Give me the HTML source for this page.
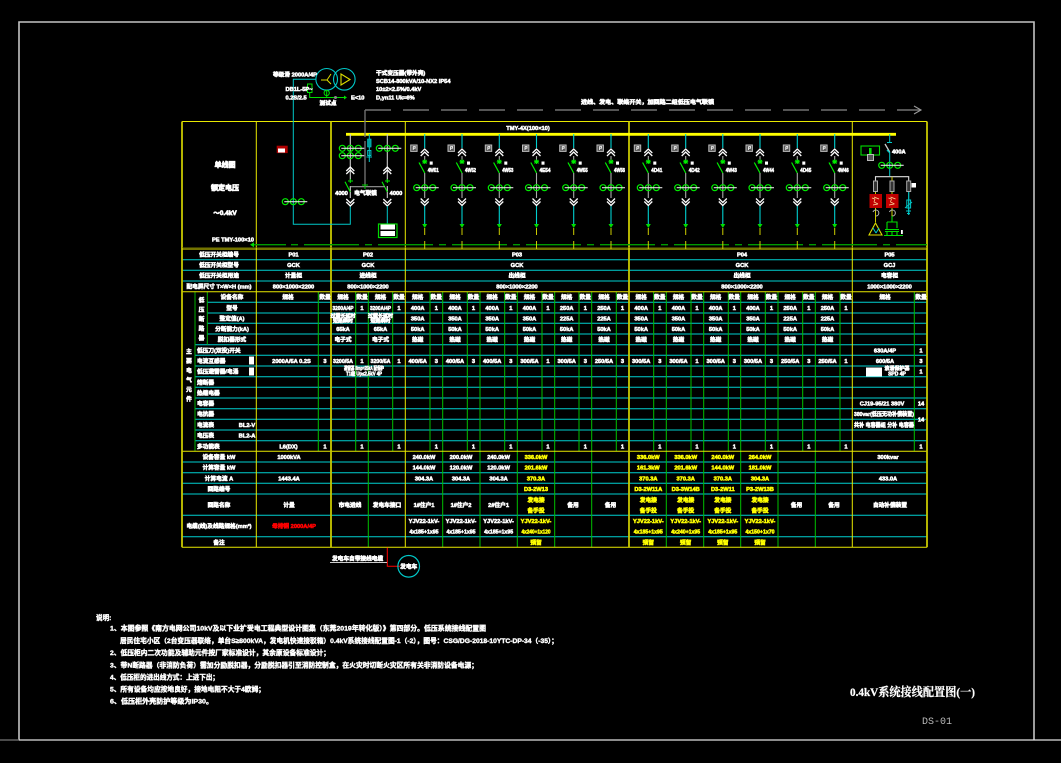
<!DOCTYPE html>
<html lang="zh"><head><meta charset="utf-8"><title>0.4kV系统接线配置图</title>
<style>
html,body{margin:0;padding:0;background:#000;width:1061px;height:763px;overflow:hidden}
svg{display:block}
text{font-family:"Liberation Sans","Noto Sans CJK SC",sans-serif;font-size:5.7px;font-weight:700;fill:#fff;stroke:#fff;stroke-width:.55;text-anchor:middle}
.l{text-anchor:start}
.y{fill:#ff0;stroke:#ff0}
.r{fill:#f00;stroke:#f00}
.s{font-size:5px}
.n{font-size:6.6px;stroke-width:.4;text-anchor:start}
.t{font-family:"Liberation Serif","Noto Serif CJK SC",serif;font-size:12px;stroke-width:.25;text-anchor:start}
.d{font-family:"Liberation Mono",monospace;font-size:10px;font-weight:400;fill:#bbb;stroke:none;text-anchor:start}
</style></head><body>
<svg xmlns="http://www.w3.org/2000/svg" width="1061" height="763" viewBox="0 0 1061 763">
<defs>
<g id="tri"><circle cx="-8" cy="0" r="3" fill="none" stroke="#0e0" stroke-width="1.2"/><circle cx="0" cy="0" r="3" fill="none" stroke="#0e0" stroke-width="1.2"/><circle cx="8" cy="0" r="3" fill="none" stroke="#0e0" stroke-width="1.2"/><path d="M-9 0H14" stroke="#ddd" fill="none" stroke-width="1.1"/></g>
<path id="cu" d="M-4 4L0 0L4 4M-4 7L0 3L4 7" fill="none" stroke="#fff" stroke-width="1.3"/>
<path id="cd" d="M-4 0L0 4L4 0M-4 3L0 7L4 3" fill="none" stroke="#fff" stroke-width="1.3"/>
<g id="fd">
<path d="M0 134V148M0 205V224" stroke="#00d0d0" fill="none" stroke-width="1.1"/>
<path d="M0 156V160M0 173V198" stroke="#aaa" fill="none" stroke-width="1.1"/>
<use href="#cu" y="149"/>
<path d="M-2.5 161.7h5M0 159.5v4.5M-2 160l4 3.5M2 160l-4 3.5" stroke="#0e0" fill="none" stroke-width="1"/>
<path d="M-5.7 162.5L0 173" stroke="#0e0" fill="none" stroke-width="1.2"/>
<use href="#tri" y="187.7"/>
<use href="#cd" y="198.5"/>
<path d="M-2.5 224H2.5L0 228Z" fill="#0d0"/>
<path d="M0 228V235M0 241V249" stroke="#cc0" fill="none"/>
<rect x="-14" y="145" width="6.4" height="6.4" fill="#555" stroke="#bbb"/>
<path d="M-11.5 146.5v3.5M-11.5 146.5h2v1.7h-2" stroke="#fff" fill="none" stroke-width=".8"/>
<rect x="5" y="161.5" width="3" height="3.2" fill="#fff"/>
</g>
</defs>
<rect width="1061" height="763" fill="#000"/>

<!-- frame -->
<path d="M19 740V22H1034V740" fill="none" stroke="#c4c4c4" stroke-width="1.6"/>
<path d="M0 740H19" stroke="#777" stroke-width="1.2"/>
<path d="M19 740H1061" stroke="#e0e0e0" stroke-width="1.2"/>

<!-- horizontal grid -->
<g fill="none" stroke="#00d0d0" stroke-width="1">
<path d="M182 259.7H927M182 270.3H927M182 281H927"/>
<path d="M207 302.3H927M207 313H927M207 323.3H927M207 334H927"/>
<path d="M195 344.7H927M195 355.3H927M195 366H927M195 376.7H927M195 387.3H927M195 398H927M195 408.7H927M195 419.3H927M195 430H927M195 440.7H927"/>
<path d="M182 462H927M182 472.7H927M182 483.3H927M182 494H927M182 515.3H927M182 536.7H927"/>
</g>
<!-- green verticals -->
<g fill="none" stroke="#00c000" stroke-width="1">
<path d="M318.3 291.7V451M355.7 291.7V451M368.3 291.7V547M392.7 291.7V451"/>
<path d="M430 291.7V451M442.7 291.7V547M467.3 291.7V451M480 291.7V547M504.7 291.7V451M517.3 291.7V547M542 291.7V451M554.7 291.7V547M579 291.7V451M591.7 291.7V547M616.3 291.7V451"/>
<path d="M653.7 291.7V451M666.3 291.7V547M691 291.7V451M703.7 291.7V547M728.3 291.7V451M740.7 291.7V547M765.3 291.7V451M778 291.7V547M802.7 291.7V451M815.3 291.7V547M840 291.7V451M914.3 291.7V451"/>
<path d="M195 291.7V451M207.3 291.7V344.7" stroke="#00b000"/>
</g>
<!-- yellow grid -->
<g fill="none" stroke="#e8e800" stroke-width="1">
<path d="M182 121.5H927M182 249H927M182 291.7H927M182 451.3H927M182 547.3H927"/>
<path d="M256.3 121.5V547M405.3 121.5V547M852.3 121.5V547"/>
<path d="M182 121.5V547.3M331 121.5V547M629 121.5V547M927 121.5V547.3" stroke="#c8c800" stroke-width="1.8"/>
<path d="M182 247.5H927" stroke="#777700" stroke-width=".6"/>
</g>
<path d="M346 134.3H896" stroke="#ff0" stroke-width="2.8"/>

<!-- dashed green PE -->
<path d="M252 244.7H927" stroke="#009a00" stroke-width="1.4" stroke-dasharray="34 5 7 6 55 6 7 6 55 6 7 6 55 6 7 6 55 6 7 6 55 6 7 6 55 6 7 6 55 6 7 6 55 6 7 6 55 6 7 6"/>
<path d="M250 244.7L254 242.2V247.2Z" fill="#0d0"/>
<!-- dashed gray -->
<path d="M365 110H920" fill="none" stroke="#888" stroke-width="1.3" stroke-dasharray="26 12"/>
<path d="M365 110V120M365 141V172M365 170V186" stroke="#777" fill="none" stroke-width="1.3"/>
<path d="M365 120V137" stroke="#777" fill="none" stroke-width="1.3"/>
<path d="M914 106L921 110L914 114" fill="none" stroke="#999" stroke-width="1.1"/>

<!-- transformer -->
<circle cx="326.7" cy="79.3" r="10.8" fill="none" stroke="#00c8c8" stroke-width="1.1"/>
<circle cx="344.3" cy="79.3" r="10.8" fill="none" stroke="#00c8c8" stroke-width="1.1"/>
<path d="M321 80H327M327 80L331 74M327 80L331 84" stroke="#dd0" fill="none" stroke-width="1"/>
<path d="M341 74V85L350 79.5Z" stroke="#dd0" fill="none" stroke-width="1.1"/>
<path d="M315.5 79.3H293.3V224.3H350.3V205" stroke="#00c8c8" fill="none" stroke-width="1"/>
<rect x="307.5" y="84" width="4.5" height="8.5" fill="none" stroke="#0d0"/>
<path d="M309.7 92.5V97.5H344" stroke="#0d0" fill="none"/>
<path d="M344 95.5L347 97.5L344 99.5Z" fill="#0d0"/>
<circle cx="326.7" cy="93" r="2.6" fill="none" stroke="#0d0"/>
<path d="M326.7 90V97.5" stroke="#0d0"/>
<circle cx="335.5" cy="97.5" r="1.5" fill="#888"/>
<text class="l" x="273" y="76.5">等级滑 2000A/4P</text>
<text class="l" x="285.5" y="91">DB1L-5P~</text>
<text class="l" x="285.5" y="99.5">0.2S/2.5</text>
<text class="l" x="351" y="99.5">E&lt;10</text>
<text x="328" y="105">测试点</text>
<text class="l" x="376" y="75">干式变压器(带外壳)</text>
<text class="l" x="376" y="83.2">SCB14-800kVA/10-NX2 IP54</text>
<text class="l" x="376" y="91.2">10±2×2.5%/0.4kV</text>
<text class="l" x="376" y="99.5">D,yn11 Uk=6%</text>
<text class="l" x="581" y="104" textLength="133" lengthAdjust="spacingAndGlyphs">进线、发电、联络开关，加回路二组低压电气联锁</text>
<text x="528" y="129.8">TMY-4X(100×10)</text>

<!-- left panel text -->
<text style="font-size:7px;stroke-width:.7" x="225" y="167">单线图</text>
<text style="font-size:7px;stroke-width:.7" x="225" y="190">额定电压</text>
<text style="font-size:6.5px;stroke-width:.7" x="225" y="215">～0.4kV</text>
<text class="l" x="212" y="241.5">PE TMY-100×10</text>
<rect x="276.7" y="145.7" width="11" height="7.4" fill="#b00000"/>
<rect x="278" y="148.5" width="7" height="4" fill="#fff"/>
<use href="#tri" x="293.3" y="201.7"/>

<!-- P02 -->
<path d="M350.3 134V180M387.3 134V180M350.3 186V198M387.3 186V198" stroke="#ccc" fill="none" stroke-width="1.1"/>
<use href="#tri" x="350.3" y="148.3"/><use href="#tri" x="350.3" y="155.7"/><use href="#tri" x="387.3" y="148.3"/>
<use href="#cu" x="350.3" y="167"/><use href="#cu" x="387.3" y="167"/>
<path d="M348 181h5M350.3 179v4M385 181h5M387.3 179v4" stroke="#0e0" fill="none"/>
<path d="M345 181.7L350.3 192M382 181.7L387.3 192" stroke="#0e0" fill="none" stroke-width="1.1"/>
<use href="#cd" x="350.3" y="199"/><use href="#cd" x="387.3" y="199"/>
<path d="M387.3 206V224" stroke="#00c8c8" fill="none"/>
<path d="M351 186.7H385" stroke="#999" fill="none" stroke-width="1.2"/>
<path d="M362 185H368M365 185V189" stroke="#0c0" fill="none"/>
<rect x="378.5" y="224" width="18.5" height="13.5" fill="none" stroke="#0d0" stroke-width="1.2"/>
<rect x="380.5" y="224.5" width="14.5" height="5" fill="#fff"/><rect x="380.5" y="231" width="14.5" height="5" fill="#fff"/>
<path d="M369.3 134V141M369.3 147V162" stroke="#00c8c8" fill="none"/>
<rect x="367.5" y="139" width="3.6" height="8" fill="#00a0a0" stroke="#00c8c8" stroke-width=".6"/>
<rect x="367.7" y="150.5" width="3.2" height="5" fill="none" stroke="#00c8c8"/>
<path d="M366.5 157H372" stroke="#00c8c8" fill="none"/>
<text x="341.5" y="195">4000</text>
<text x="365.5" y="195">电气联锁</text>
<text x="396" y="195">4000</text>

<!-- feeders -->
<use href="#fd" x="424.7"/><use href="#fd" x="462"/><use href="#fd" x="499.3"/><use href="#fd" x="536.5"/><use href="#fd" x="573.7"/><use href="#fd" x="611"/><use href="#fd" x="648.3"/><use href="#fd" x="685.7"/><use href="#fd" x="722.8"/><use href="#fd" x="760"/><use href="#fd" x="797.3"/><use href="#fd" x="834.7"/>
<g>
<text class="l" x="427.7" y="172.2" textLength="11" lengthAdjust="spacingAndGlyphs">4W51</text><text class="l" x="465" y="172.2" textLength="11" lengthAdjust="spacingAndGlyphs">4W52</text><text class="l" x="502.3" y="172.2" textLength="11" lengthAdjust="spacingAndGlyphs">4W53</text><text class="l" x="539.5" y="172.2" textLength="11" lengthAdjust="spacingAndGlyphs">4E54</text><text class="l" x="576.7" y="172.2" textLength="11" lengthAdjust="spacingAndGlyphs">4W55</text><text class="l" x="614" y="172.2" textLength="11" lengthAdjust="spacingAndGlyphs">4W56</text><text class="l" x="651.3" y="172.2" textLength="11" lengthAdjust="spacingAndGlyphs">4D41</text><text class="l" x="688.7" y="172.2" textLength="11" lengthAdjust="spacingAndGlyphs">4D42</text><text class="l" x="725.8" y="172.2" textLength="11" lengthAdjust="spacingAndGlyphs">4W43</text><text class="l" x="763" y="172.2" textLength="11" lengthAdjust="spacingAndGlyphs">4W44</text><text class="l" x="800.3" y="172.2" textLength="11" lengthAdjust="spacingAndGlyphs">4D45</text><text class="l" x="837.7" y="172.2" textLength="11" lengthAdjust="spacingAndGlyphs">4W46</text>
</g>

<!-- P05 -->
<path d="M889.7 134V142" stroke="#00c8c8" fill="none"/>
<path d="M887 142.5H892" stroke="#00c8c8" fill="none"/>
<path d="M885 144L889.7 152" stroke="#ccc" fill="none" stroke-width="1.3"/>
<path d="M887 150L890 153" stroke="#00c8c8" fill="none" stroke-width="1.3"/>
<path d="M889.7 153V176" stroke="#00c8c8" fill="none"/>
<use href="#tri" x="889.7" y="165.3"/>
<text class="l" x="892" y="153.3">400A</text>
<rect x="861" y="146" width="18.5" height="9" fill="none" stroke="#0d0" stroke-width="1.1"/>
<rect x="869" y="148" width="2.6" height="6" fill="#0d0"/>
<rect x="867.5" y="154.5" width="6" height="6" fill="#555" stroke="#bbb"/>
<path d="M875.5 187V176.7H908.7V187" fill="none" stroke="#ddd" stroke-width="1.1"/>
<path d="M875.5 191V194M892 176.7V194" stroke="#cc0" fill="none"/>
<path d="M875.5 208V222M892 208V222" stroke="#cc0" fill="none"/>
<path d="M908.7 191V215" stroke="#00c8c8" fill="none" stroke-width="1.2"/>
<rect x="873.5" y="181" width="4" height="10.5" fill="#333" stroke="#aaa"/>
<rect x="890" y="181" width="4" height="10.5" fill="#333" stroke="#aaa"/>
<rect x="906.7" y="181" width="4" height="10.5" fill="#333" stroke="#aaa"/>
<rect x="911.5" y="183" width="4.5" height="4.5" fill="#fff"/>
<rect x="869.5" y="194" width="12.5" height="14" fill="#c00000"/>
<rect x="886" y="194" width="12.5" height="14" fill="#c00000"/>
<path d="M872 198l3 1-1 3 4 2M874 197l5 2M873 205l5-1M888.5 198l3 1-1 3 4 2M890.5 197l5 2M889 205l5-1" stroke="#ffe0a0" fill="none" stroke-width=".7"/>
<path d="M873 212a3 3 0 1 1 3 4M889.5 212a3 3 0 1 1 3 4" stroke="#bbb" fill="none" stroke-width="1"/>
<path d="M875.5 223L869 235H882Z" fill="none" stroke="#dd0" stroke-width="1.1"/>
<path d="M873 228L876 233M879 228L876 233" stroke="#00c8c8" fill="none"/>
<path d="M887 222H897V228M887 222V229M892 216V222M885 229.5H899M885 231.5H899M887 231.5V235M892 231.5V235M897 231.5V235M884 235.5H903" stroke="#0d0" fill="none" stroke-width="1.1"/>
<rect x="901" y="230" width="1.8" height="4" fill="#fff"/>
<rect x="906.8" y="200" width="3.8" height="8" fill="none" stroke="#00c8c8"/>
<path d="M905 208L912 202M906 211H911M907 213.5H910" stroke="#00c8c8" fill="none" stroke-width="1"/>

<!-- row labels -->
<text x="219" y="256.5">低压开关柜编号</text><text x="219" y="267">低压开关柜型号</text><text x="219" y="277.7">低压开关柜用途</text><text x="219" y="288.4">配电屏尺寸 T×W×H (mm)</text>
<text x="293.5" y="256.5">P01</text><text x="368" y="256.5">P02</text><text x="517" y="256.5">P03</text><text x="742" y="256.5">P04</text><text x="889.5" y="256.5">P05</text>
<text x="293.5" y="267">GCK</text><text x="368" y="267">GCK</text><text x="517" y="267">GCK</text><text x="742" y="267">GCK</text><text x="889.5" y="267">GCJ</text>
<text x="293.5" y="277.7">计量柜</text><text x="368" y="277.7">进线柜</text><text x="517" y="277.7">出线柜</text><text x="742" y="277.7">出线柜</text><text x="889.5" y="277.7">电容柜</text>
<text x="293.5" y="288.4">800×1000×2200</text><text x="368" y="288.4">800×1000×2200</text><text x="517" y="288.4">800×1000×2200</text><text x="742" y="288.4">800×1000×2200</text><text x="889.5" y="288.4">1000×1000×2200</text>

<!-- vertical labels -->
<text x="189" y="353.5">主</text><text x="189" y="363">要</text><text x="189" y="372.5">电</text><text x="189" y="382">气</text><text x="189" y="391.5">元</text><text x="189" y="401">件</text>
<text x="201.5" y="302">低</text><text x="201.5" y="311.5">压</text><text x="201.5" y="321">断</text><text x="201.5" y="330.5">路</text><text x="201.5" y="340">器</text>

<!-- body labels -->
<text x="232" y="299.2">设备名称</text><text x="232" y="310">型号</text><text x="232" y="320.5">整定值(A)</text><text x="232" y="331">分断能力(kA)</text><text x="232" y="341.7">脱扣器形式</text>
<text class="l" x="197" y="352.3">低压刀(双投)开关</text><text class="l" x="197" y="363">电流互感器</text><text class="l" x="197" y="373.5">低压避雷器/电涌</text><text class="l" x="197" y="384.3">熔断器</text><text class="l" x="197" y="395">热继电器</text><text class="l" x="197" y="405.5">电容器</text><text class="l" x="197" y="416">电抗器</text><text class="l" x="197" y="427">电流表</text><text class="l" x="197" y="437.6">电压表</text><text class="l" x="197" y="448.3">多功能表</text>
<rect x="249" y="356.5" width="5" height="8" fill="#fff"/><rect x="249" y="367.5" width="5" height="8" fill="#fff"/>
<text x="247" y="427">BL2-V</text><text x="247" y="437.6">BL2-A</text>

<!-- header row -->
<g>
<text x="288" y="299.2">规格</text><text x="325" y="299.2">数量</text>
<text x="343" y="299.2">规格</text><text x="362" y="299.2">数量</text><text x="380.5" y="299.2">规格</text><text x="399" y="299.2">数量</text>
<text x="417.7" y="299.2">规格</text><text x="436.3" y="299.2">数量</text><text x="455" y="299.2">规格</text><text x="473.5" y="299.2">数量</text><text x="492.2" y="299.2">规格</text><text x="510.8" y="299.2">数量</text><text x="529.5" y="299.2">规格</text><text x="548" y="299.2">数量</text><text x="566.7" y="299.2">规格</text><text x="585.3" y="299.2">数量</text><text x="604" y="299.2">规格</text><text x="622.5" y="299.2">数量</text><text x="641.2" y="299.2">规格</text><text x="659.8" y="299.2">数量</text><text x="678.5" y="299.2">规格</text><text x="697" y="299.2">数量</text><text x="715.7" y="299.2">规格</text><text x="734.3" y="299.2">数量</text><text x="753" y="299.2">规格</text><text x="771.5" y="299.2">数量</text><text x="790.2" y="299.2">规格</text><text x="808.8" y="299.2">数量</text><text x="827.5" y="299.2">规格</text><text x="846" y="299.2">数量</text>
<text x="885" y="299.2">规格</text><text x="921" y="299.2">数量</text>
</g>
<!-- rating row -->
<g>
<text x="343" y="310" textLength="21" lengthAdjust="spacingAndGlyphs">3200A/4P</text><text x="362" y="310">1</text><text x="380.5" y="310" textLength="21" lengthAdjust="spacingAndGlyphs">3200A/4P</text><text x="399" y="310">1</text>
<text x="417.7" y="310">400A</text><text x="436.3" y="310">1</text><text x="455" y="310">400A</text><text x="473.5" y="310">1</text><text x="492.2" y="310">400A</text><text x="510.8" y="310">1</text><text x="529.5" y="310">400A</text><text x="548" y="310">1</text><text x="566.7" y="310">250A</text><text x="585.3" y="310">1</text><text x="604" y="310">250A</text><text x="622.5" y="310">1</text><text x="641.2" y="310">400A</text><text x="659.8" y="310">1</text><text x="678.5" y="310">400A</text><text x="697" y="310">1</text><text x="715.7" y="310">400A</text><text x="734.3" y="310">1</text><text x="753" y="310">400A</text><text x="771.5" y="310">1</text><text x="790.2" y="310">250A</text><text x="808.8" y="310">1</text><text x="827.5" y="310">250A</text><text x="846" y="310">1</text>
</g>
<!-- setting row -->
<g>
<text class="s" x="343" y="317.5">过载长延时</text><text class="s" x="343" y="322.5">短路瞬时</text><text class="s" x="380.5" y="317.5">过载长延时</text><text class="s" x="380.5" y="322.5">短路瞬时</text>
<text x="417.7" y="320.5">350A</text><text x="455" y="320.5">350A</text><text x="492.2" y="320.5">350A</text><text x="529.5" y="320.5">350A</text><text x="566.7" y="320.5">225A</text><text x="604" y="320.5">225A</text><text x="641.2" y="320.5">350A</text><text x="678.5" y="320.5">350A</text><text x="715.7" y="320.5">350A</text><text x="753" y="320.5">350A</text><text x="790.2" y="320.5">225A</text><text x="827.5" y="320.5">225A</text>
</g>
<!-- breaking row -->
<g>
<text x="343" y="331">65kA</text><text x="380.5" y="331">65kA</text>
<text x="417.7" y="331">50kA</text><text x="455" y="331">50kA</text><text x="492.2" y="331">50kA</text><text x="529.5" y="331">50kA</text><text x="566.7" y="331">50kA</text><text x="604" y="331">50kA</text><text x="641.2" y="331">50kA</text><text x="678.5" y="331">50kA</text><text x="715.7" y="331">50kA</text><text x="753" y="331">50kA</text><text x="790.2" y="331">50kA</text><text x="827.5" y="331">50kA</text>
</g>
<!-- trip row -->
<g>
<text x="343" y="341.7">电子式</text><text x="380.5" y="341.7">电子式</text>
<text x="417.7" y="341.7">热磁</text><text x="455" y="341.7">热磁</text><text x="492.2" y="341.7">热磁</text><text x="529.5" y="341.7">热磁</text><text x="566.7" y="341.7">热磁</text><text x="604" y="341.7">热磁</text><text x="641.2" y="341.7">热磁</text><text x="678.5" y="341.7">热磁</text><text x="715.7" y="341.7">热磁</text><text x="753" y="341.7">热磁</text><text x="790.2" y="341.7">热磁</text><text x="827.5" y="341.7">热磁</text>
</g>
<text x="885" y="352.3">630A/4P</text><text x="921" y="352.3">1</text>
<!-- CT row -->
<g>
<text x="291.5" y="363">2000A/5A 0.2S</text><text x="325" y="363">3</text>
<text x="343" y="363" textLength="20" lengthAdjust="spacingAndGlyphs">3200/5A</text><text x="362" y="363">1</text><text x="380.5" y="363" textLength="20" lengthAdjust="spacingAndGlyphs">3200/5A</text><text x="399" y="363">1</text>
<text x="417.7" y="363">400/5A</text><text x="436.3" y="363">3</text><text x="455" y="363">400/5A</text><text x="473.5" y="363">3</text><text x="492.2" y="363">400/5A</text><text x="510.8" y="363">3</text><text x="529.5" y="363">300/5A</text><text x="548" y="363">1</text><text x="566.7" y="363">300/5A</text><text x="585.3" y="363">3</text><text x="604" y="363">250/5A</text><text x="622.5" y="363">3</text><text x="641.2" y="363">300/5A</text><text x="659.8" y="363">3</text><text x="678.5" y="363">300/5A</text><text x="697" y="363">1</text><text x="715.7" y="363">300/5A</text><text x="734.3" y="363">3</text><text x="753" y="363">300/5A</text><text x="771.5" y="363">3</text><text x="790.2" y="363">250/5A</text><text x="808.8" y="363">3</text><text x="827.5" y="363">250/5A</text><text x="846" y="363">1</text>
<text x="885" y="363">600/5A</text><text x="921" y="363">3</text>
</g>
<text class="s" x="364" y="370" textLength="40" lengthAdjust="spacingAndGlyphs">避雷器 Iimp=25kA 配保护</text><text class="s" x="364" y="375.5" textLength="36" lengthAdjust="spacingAndGlyphs">T1级 Up≤2.5kV 4P</text>
<rect x="866" y="367.5" width="16" height="9" fill="#fff"/>
<text class="s" x="897" y="370">浪涌保护器</text><text class="s" x="897" y="375.5">SPD 4P</text><text x="921" y="373.5">1</text>
<text x="882" y="405.5">CJ19-95/21 380V</text><text x="921" y="405.5">14</text>
<text x="884" y="416" textLength="60" lengthAdjust="spacingAndGlyphs">380var(低压无功补偿装置)</text><text x="884" y="427" textLength="60" lengthAdjust="spacingAndGlyphs">共补 电容器组 分补 电容器</text><text x="921" y="421.5">14</text>
<!-- qty row -->
<g>
<text x="288.5" y="448.3">L6(DX)</text><text x="325" y="448.3">1</text><text x="362" y="448.3">1</text><text x="399" y="448.3">1</text>
<text x="436.3" y="448.3">1</text><text x="473.5" y="448.3">1</text><text x="510.8" y="448.3">1</text><text x="548" y="448.3">1</text><text x="585.3" y="448.3">1</text><text x="622.5" y="448.3">1</text><text x="659.8" y="448.3">1</text><text x="697" y="448.3">1</text><text x="734.3" y="448.3">1</text><text x="771.5" y="448.3">1</text><text x="808.8" y="448.3">1</text><text x="846" y="448.3">1</text><text x="921" y="448.3">1</text>
</g>

<!-- bottom rows -->
<g>
<text x="219" y="459">设备容量 kW</text><text x="219" y="469.7">计算容量 kW</text><text x="219" y="480.3">计算电流 A</text><text x="219" y="491">回路编号</text><text x="219" y="507">回路名称</text><text x="219" y="528">电缆(线)及线路规格(mm²)</text><text x="219" y="544.3">备注</text>
<text x="289" y="459">1000kVA</text><text x="289" y="480.3">1443.4A</text><text x="289" y="507">计量</text><text class="r" x="294" y="528">母排铜 2000A/4P</text>
<text x="350" y="507">市电进线</text><text x="387" y="507">发电车接口</text>
<text x="424" y="459">240.0kW</text><text x="461" y="459">200.0kW</text><text x="498.6" y="459">240.0kW</text><text class="y" x="536" y="459">336.0kW</text><text class="y" x="648.3" y="459">336.0kW</text><text class="y" x="685.7" y="459">336.0kW</text><text class="y" x="722.8" y="459">240.0kW</text><text class="y" x="760" y="459">264.0kW</text><text x="888" y="459">300kvar</text>
<text x="424" y="469.7">144.0kW</text><text x="461" y="469.7">120.0kW</text><text x="498.6" y="469.7">120.0kW</text><text class="y" x="536" y="469.7">201.6kW</text><text class="y" x="648.3" y="469.7">161.3kW</text><text class="y" x="685.7" y="469.7">201.6kW</text><text class="y" x="722.8" y="469.7">144.0kW</text><text class="y" x="760" y="469.7">181.0kW</text>
<text x="424" y="480.3">304.3A</text><text x="461" y="480.3">304.3A</text><text x="498.6" y="480.3">304.3A</text><text class="y" x="536" y="480.3">370.3A</text><text class="y" x="648.3" y="480.3">370.3A</text><text class="y" x="685.7" y="480.3">370.3A</text><text class="y" x="722.8" y="480.3">370.3A</text><text class="y" x="760" y="480.3">304.3A</text><text x="888" y="480.3">433.0A</text>
<text class="y" x="536" y="491">D3-2W13</text><text class="y" x="648.3" y="491">D3-2W11A</text><text class="y" x="685.7" y="491">D3-3W14B</text><text class="y" x="722.8" y="491">D3-2W11</text><text class="y" x="760" y="491">P3-2W13B</text>
<text x="424" y="507">1#住户1</text><text x="461" y="507">1#住户2</text><text x="498.6" y="507">2#住户1</text>
<text class="y" x="536" y="502">发电接</text><text class="y" x="536" y="512.5">备手投</text><text x="573" y="507">备用</text><text x="610.5" y="507">备用</text>
<text class="y" x="648.3" y="502">发电接</text><text class="y" x="648.3" y="512.5">备手投</text><text class="y" x="685.7" y="502">发电接</text><text class="y" x="685.7" y="512.5">备手投</text><text class="y" x="722.8" y="502">发电接</text><text class="y" x="722.8" y="512.5">备手投</text><text class="y" x="760" y="502">发电接</text><text class="y" x="760" y="512.5">备手投</text>
<text x="796.5" y="507">备用</text><text x="834" y="507">备用</text><text x="890" y="507">自动补偿装置</text>
<text x="424" y="523">YJV22-1kV-</text><text x="461" y="523">YJV22-1kV-</text><text x="498.6" y="523">YJV22-1kV-</text><text class="y" x="536" y="523">YJV22-1kV-</text><text class="y" x="648.3" y="523">YJV22-1kV-</text><text class="y" x="685.7" y="523">YJV22-1kV-</text><text class="y" x="722.8" y="523">YJV22-1kV-</text><text class="y" x="760" y="523">YJV22-1kV-</text>
<text x="424" y="533.5" textLength="29" lengthAdjust="spacingAndGlyphs">4x185+1x95</text><text x="461" y="533.5" textLength="29" lengthAdjust="spacingAndGlyphs">4x185+1x95</text><text x="498.6" y="533.5" textLength="29" lengthAdjust="spacingAndGlyphs">4x185+1x95</text><text class="y" x="536" y="533.5" textLength="29" lengthAdjust="spacingAndGlyphs">4x240+1x120</text><text class="y" x="648.3" y="533.5" textLength="29" lengthAdjust="spacingAndGlyphs">4x185+1x95</text><text class="y" x="685.7" y="533.5" textLength="29" lengthAdjust="spacingAndGlyphs">4x240+1x95</text><text class="y" x="722.8" y="533.5" textLength="29" lengthAdjust="spacingAndGlyphs">4x185+1x95</text><text class="y" x="760" y="533.5" textLength="29" lengthAdjust="spacingAndGlyphs">4x150+1x70</text>
<text class="y" x="536" y="544.3">预留</text><text class="y" x="648.3" y="544.3">预留</text><text class="y" x="685.7" y="544.3">预留</text><text class="y" x="722.8" y="544.3">预留</text><text class="y" x="760" y="544.3">预留</text>
</g>

<!-- generator connection -->
<path d="M387.3 547.5V566.3H400" stroke="#f00" fill="none" stroke-width="1"/>
<path d="M330 562.5H387" stroke="#ccc" stroke-width="1"/>
<text class="l" x="332" y="560.5">发电车自带接线电缆</text>
<circle cx="408.7" cy="566.3" r="10.8" fill="none" stroke="#00c8c8" stroke-width="1.2"/>
<text x="408.7" y="568.5">发电车</text>

<!-- notes -->
<text class="n" x="96" y="620">说明:</text>
<text class="n" x="110" y="630.5" textLength="376" lengthAdjust="spacingAndGlyphs">1、本图参照《南方电网公司10kV及以下业扩受电工程典型设计图集（东莞2019年转化版）》第四部分。低压系统接线配置图</text>
<text class="n" x="120" y="642.8" textLength="438" lengthAdjust="spacingAndGlyphs">居民住宅小区（2台变压器联络，单台S≥800kVA，发电机快速接驳箱）0.4kV系统接线配置图-1（-2），图号：CSG/DG-2018-10YTC-DP-34（-35）；</text>
<text class="n" x="110" y="655" textLength="220" lengthAdjust="spacingAndGlyphs">2、低压柜内二次功能及辅助元件按厂家标准设计，其余原设备标准设计；</text>
<text class="n" x="110" y="667.3" textLength="368" lengthAdjust="spacingAndGlyphs">3、带N断路器（非消防负荷）需加分励脱扣器，分励脱扣器引至消防控制盒，在火灾时切断火灾区所有关非消防设备电源；</text>
<text class="n" x="110" y="679.5" textLength="109" lengthAdjust="spacingAndGlyphs">4、低压柜的进出线方式：上进下出；</text>
<text class="n" x="110" y="691.5" textLength="155" lengthAdjust="spacingAndGlyphs">5、所有设备均应按地良好，接地电阻不大于4欧姆；</text>
<text class="n" x="110" y="703.5" textLength="103" lengthAdjust="spacingAndGlyphs">6、低压柜外壳防护等级为IP30。</text>

<text class="t" x="850" y="696" textLength="125" lengthAdjust="spacingAndGlyphs">0.4kV系统接线配置图(一)</text>
<text class="d" x="922" y="724">DS-01</text>
</svg>
</body></html>
